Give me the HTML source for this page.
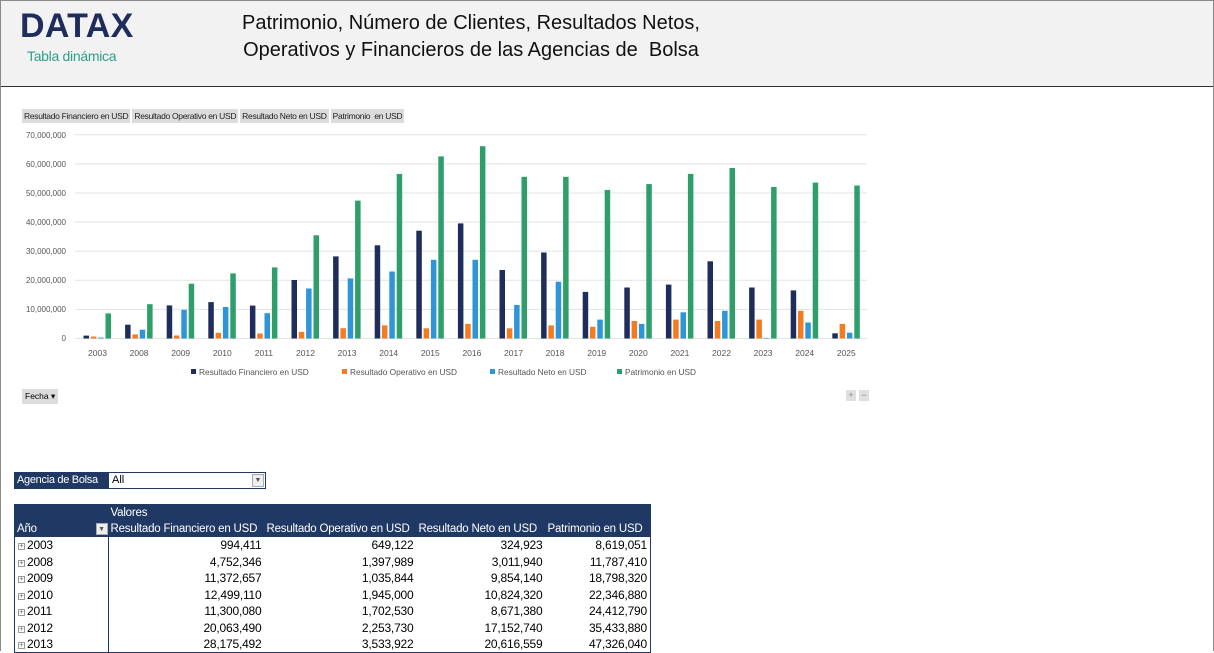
<!DOCTYPE html>
<html><head><meta charset="utf-8"><style>
*{margin:0;padding:0;box-sizing:border-box}
body{width:1214px;height:651px;overflow:hidden;background:#fff;font-family:"Liberation Sans",sans-serif;position:relative}
.frame{position:absolute;left:0;top:0;width:1214px;height:651px;border:1px solid #8a8a8a;border-bottom:none}
.hdr{position:absolute;left:1px;top:1px;width:1212px;height:86px;background:#f2f2f2;border-bottom:1px solid #333}
.logo{position:absolute;left:19px;top:6px;font-size:34px;font-weight:bold;color:#1f2d5c;letter-spacing:0.3px}
.sub{position:absolute;left:26px;top:47px;font-size:14px;color:#2e9e8a;letter-spacing:-0.3px}
.title{position:absolute;left:190px;top:9px;width:560px;text-align:center;font-size:20px;line-height:27px;color:#111}
.tabs{position:absolute;left:22px;top:109px;display:flex;gap:2px}
.tabs span{background:#dcdcdc;font-size:8.5px;padding:2px 2px;color:#222;letter-spacing:-0.3px}
.fecha{position:absolute;left:22px;top:389px;background:#dcdcdc;font-size:8.5px;padding:2px 3px}
.pm{position:absolute;top:390px;width:10px;height:11px;background:#e0e0e0;font-size:9px;color:#888;text-align:center;line-height:11px}
.filt{position:absolute;left:14px;top:472px;width:252px;height:17px;border:1px solid #203864;display:flex;font-size:11px;white-space:nowrap}
.filt .l{background:#203864;color:#fff;width:94px;padding:1px 2px;letter-spacing:-0.3px}
.filt .r{flex:1;padding:1px 3px;position:relative}
.dd{position:absolute;right:1px;top:1px;width:12px;height:13px;border:1px solid #aaa;background:#eee;font-size:7px;text-align:center;line-height:12px;color:#555}
table{position:absolute;left:14px;top:504px;width:636px;table-layout:fixed;border-collapse:collapse;font-size:12px;border:1px solid #203864}
th{background:#203864;color:#fff;font-weight:normal;text-align:left;padding:0 2px;height:16.5px;white-space:nowrap;font-size:11.5px;letter-spacing:-0.2px;overflow:hidden}
td{height:16.5px;text-align:right;padding:0 3px;white-space:nowrap;letter-spacing:-0.2px}
td:first-child{text-align:left;border-right:1px solid #203864}
.pl{display:inline-block;width:7px;height:7px;border:1px solid #999;font-size:7px;line-height:5px;text-align:center;margin-right:2px;vertical-align:1px;color:#555}
</style></head><body>
<div class="frame"></div>
<div class="hdr">
<div class="logo">DATAX</div>
<div class="sub">Tabla dinámica</div>
<div class="title">Patrimonio, Número de Clientes, Resultados Netos,<br>Operativos y Financieros de las Agencias de&nbsp; Bolsa</div>
</div>
<div class="tabs"><span>Resultado Financiero en USD</span><span>Resultado Operativo en USD</span><span>Resultado Neto en USD</span><span>Patrimonio &nbsp;en USD</span></div>
<svg style="position:absolute;left:0;top:0" width="1214" height="420">
<g stroke="#e3e3e3" stroke-width="1">
<line x1="75" x2="867" y1="338.5" y2="338.5"/><line x1="75" x2="867" y1="309.4" y2="309.4"/><line x1="75" x2="867" y1="280.3" y2="280.3"/><line x1="75" x2="867" y1="251.2" y2="251.2"/><line x1="75" x2="867" y1="222.1" y2="222.1"/><line x1="75" x2="867" y1="193" y2="193"/><line x1="75" x2="867" y1="163.9" y2="163.9"/><line x1="75" x2="867" y1="134.8" y2="134.8"/>
</g>
<g font-size="8" fill="#555" text-anchor="end">
<text x="66" y="341">0</text><text x="66" y="312">10,000,000</text><text x="66" y="283">20,000,000</text><text x="66" y="254">30,000,000</text><text x="66" y="225">40,000,000</text><text x="66" y="196">50,000,000</text><text x="66" y="167">60,000,000</text><text x="66" y="138">70,000,000</text>
</g>
<g id="bars">
<g transform="translate(97.5,338.5) scale(1,-1)"><rect x="-14" width="5.5" height="2.9" fill="#1f2d5c"/><rect x="-6.7" width="5.5" height="1.9" fill="#f47c20"/><rect x="0.6" width="5.5" height="0.9" fill="#2e96d6"/><rect x="8" width="5.5" height="25.1" fill="#2e9e6a"/></g>
<g transform="translate(139.1,338.5) scale(1,-1)"><rect x="-14" width="5.5" height="13.8" fill="#1f2d5c"/><rect x="-6.7" width="5.5" height="4.1" fill="#f47c20"/><rect x="0.6" width="5.5" height="8.8" fill="#2e96d6"/><rect x="8" width="5.5" height="34.3" fill="#2e9e6a"/></g>
<g transform="translate(180.7,338.5) scale(1,-1)"><rect x="-14" width="5.5" height="33.1" fill="#1f2d5c"/><rect x="-6.7" width="5.5" height="3" fill="#f47c20"/><rect x="0.6" width="5.5" height="28.7" fill="#2e96d6"/><rect x="8" width="5.5" height="54.8" fill="#2e9e6a"/></g>
<g transform="translate(222.3,338.5) scale(1,-1)"><rect x="-14" width="5.5" height="36.4" fill="#1f2d5c"/><rect x="-6.7" width="5.5" height="5.7" fill="#f47c20"/><rect x="0.6" width="5.5" height="31.5" fill="#2e96d6"/><rect x="8" width="5.5" height="65.1" fill="#2e9e6a"/></g>
<g transform="translate(263.9,338.5) scale(1,-1)"><rect x="-14" width="5.5" height="32.9" fill="#1f2d5c"/><rect x="-6.7" width="5.5" height="5" fill="#f47c20"/><rect x="0.6" width="5.5" height="25.3" fill="#2e96d6"/><rect x="8" width="5.5" height="71.1" fill="#2e9e6a"/></g>
<g transform="translate(305.5,338.5) scale(1,-1)"><rect x="-14" width="5.5" height="58.5" fill="#1f2d5c"/><rect x="-6.7" width="5.5" height="6.6" fill="#f47c20"/><rect x="0.6" width="5.5" height="50" fill="#2e96d6"/><rect x="8" width="5.5" height="103.2" fill="#2e9e6a"/></g>
<g transform="translate(347.1,338.5) scale(1,-1)"><rect x="-14" width="5.5" height="82.1" fill="#1f2d5c"/><rect x="-6.7" width="5.5" height="10.3" fill="#f47c20"/><rect x="0.6" width="5.5" height="60.1" fill="#2e96d6"/><rect x="8" width="5.5" height="137.9" fill="#2e9e6a"/></g>
<g transform="translate(388.7,338.5) scale(1,-1)"><rect x="-14" width="5.5" height="93.2" fill="#1f2d5c"/><rect x="-6.7" width="5.5" height="13.1" fill="#f47c20"/><rect x="0.6" width="5.5" height="67" fill="#2e96d6"/><rect x="8" width="5.5" height="164.6" fill="#2e9e6a"/></g>
<g transform="translate(430.3,338.5) scale(1,-1)"><rect x="-14" width="5.5" height="107.8" fill="#1f2d5c"/><rect x="-6.7" width="5.5" height="10.2" fill="#f47c20"/><rect x="0.6" width="5.5" height="78.7" fill="#2e96d6"/><rect x="8" width="5.5" height="182.1" fill="#2e9e6a"/></g>
<g transform="translate(471.9,338.5) scale(1,-1)"><rect x="-14" width="5.5" height="115.1" fill="#1f2d5c"/><rect x="-6.7" width="5.5" height="14.6" fill="#f47c20"/><rect x="0.6" width="5.5" height="78.7" fill="#2e96d6"/><rect x="8" width="5.5" height="192.3" fill="#2e9e6a"/></g>
<g transform="translate(513.5,338.5) scale(1,-1)"><rect x="-14" width="5.5" height="68.5" fill="#1f2d5c"/><rect x="-6.7" width="5.5" height="10.2" fill="#f47c20"/><rect x="0.6" width="5.5" height="33.5" fill="#2e96d6"/><rect x="8" width="5.5" height="161.7" fill="#2e9e6a"/></g>
<g transform="translate(555.1,338.5) scale(1,-1)"><rect x="-14" width="5.5" height="86" fill="#1f2d5c"/><rect x="-6.7" width="5.5" height="13.1" fill="#f47c20"/><rect x="0.6" width="5.5" height="56.8" fill="#2e96d6"/><rect x="8" width="5.5" height="161.7" fill="#2e9e6a"/></g>
<g transform="translate(596.7,338.5) scale(1,-1)"><rect x="-14" width="5.5" height="46.6" fill="#1f2d5c"/><rect x="-6.7" width="5.5" height="11.7" fill="#f47c20"/><rect x="0.6" width="5.5" height="18.9" fill="#2e96d6"/><rect x="8" width="5.5" height="148.6" fill="#2e9e6a"/></g>
<g transform="translate(638.3,338.5) scale(1,-1)"><rect x="-14" width="5.5" height="51" fill="#1f2d5c"/><rect x="-6.7" width="5.5" height="17.5" fill="#f47c20"/><rect x="0.6" width="5.5" height="14.6" fill="#2e96d6"/><rect x="8" width="5.5" height="154.4" fill="#2e9e6a"/></g>
<g transform="translate(679.9,338.5) scale(1,-1)"><rect x="-14" width="5.5" height="53.9" fill="#1f2d5c"/><rect x="-6.7" width="5.5" height="18.9" fill="#f47c20"/><rect x="0.6" width="5.5" height="26.2" fill="#2e96d6"/><rect x="8" width="5.5" height="164.6" fill="#2e9e6a"/></g>
<g transform="translate(721.5,338.5) scale(1,-1)"><rect x="-14" width="5.5" height="77.2" fill="#1f2d5c"/><rect x="-6.7" width="5.5" height="17.5" fill="#f47c20"/><rect x="0.6" width="5.5" height="27.7" fill="#2e96d6"/><rect x="8" width="5.5" height="170.5" fill="#2e9e6a"/></g>
<g transform="translate(763.1,338.5) scale(1,-1)"><rect x="-14" width="5.5" height="51" fill="#1f2d5c"/><rect x="-6.7" width="5.5" height="18.9" fill="#f47c20"/><rect x="0.6" width="5.5" height="0.6" fill="#2e96d6"/><rect x="8" width="5.5" height="151.5" fill="#2e9e6a"/></g>
<g transform="translate(804.7,338.5) scale(1,-1)"><rect x="-14" width="5.5" height="48.1" fill="#1f2d5c"/><rect x="-6.7" width="5.5" height="27.7" fill="#f47c20"/><rect x="0.6" width="5.5" height="16" fill="#2e96d6"/><rect x="8" width="5.5" height="155.9" fill="#2e9e6a"/></g>
<g transform="translate(846.3,338.5) scale(1,-1)"><rect x="-14" width="5.5" height="5.2" fill="#1f2d5c"/><rect x="-6.7" width="5.5" height="14.6" fill="#f47c20"/><rect x="0.6" width="5.5" height="5.8" fill="#2e96d6"/><rect x="8" width="5.5" height="153" fill="#2e9e6a"/></g>
</g>
<g font-size="8.5" fill="#555" text-anchor="middle">
<text x="97.5" y="356">2003</text><text x="139.1" y="356">2008</text><text x="180.7" y="356">2009</text><text x="222.3" y="356">2010</text><text x="263.9" y="356">2011</text><text x="305.5" y="356">2012</text><text x="347.1" y="356">2013</text><text x="388.7" y="356">2014</text><text x="430.3" y="356">2015</text><text x="471.9" y="356">2016</text><text x="513.5" y="356">2017</text><text x="555.1" y="356">2018</text><text x="596.7" y="356">2019</text><text x="638.3" y="356">2020</text><text x="679.9" y="356">2021</text><text x="721.5" y="356">2022</text><text x="763.1" y="356">2023</text><text x="804.7" y="356">2024</text><text x="846.3" y="356">2025</text>
</g>
<g font-size="8.3" fill="#555">
<rect x="191" y="369" width="5" height="5" fill="#1f2d5c"/><text x="199" y="375">Resultado Financiero en USD</text>
<rect x="342" y="369" width="5" height="5" fill="#f47c20"/><text x="350" y="375">Resultado Operativo en USD</text>
<rect x="490" y="369" width="5" height="5" fill="#2e96d6"/><text x="498" y="375">Resultado Neto en USD</text>
<rect x="617" y="369" width="5" height="5" fill="#2e9e6a"/><text x="625" y="375">Patrimonio en USD</text>
</g>
</svg>
<div class="fecha">Fecha ▾</div>
<div class="pm" style="left:846px">+</div><div class="pm" style="left:859px">−</div>
<div class="filt"><div class="l">Agencia de Bolsa</div><div class="r">All<div class="dd">▼</div></div></div>
<table>
<colgroup><col style="width:94px"><col style="width:156px"><col style="width:152px"><col style="width:129px"><col style="width:105px"></colgroup>
<tr><th style="height:16px"></th><th colspan="4" style="height:16px">Valores</th></tr>
<tr><th style="position:relative">Año<span style="position:absolute;right:1px;top:2px;width:12px;height:12px;background:#eee;border:1px solid #aaa;color:#555;font-size:7px;text-align:center;line-height:11px">▼</span></th><th>Resultado Financiero en USD</th><th>Resultado Operativo en USD</th><th>Resultado Neto en USD</th><th>Patrimonio en USD</th></tr>
<tr><td><span class="pl">+</span>2003</td><td>994,411</td><td>649,122</td><td>324,923</td><td>8,619,051</td></tr>
<tr><td><span class="pl">+</span>2008</td><td>4,752,346</td><td>1,397,989</td><td>3,011,940</td><td>11,787,410</td></tr>
<tr><td><span class="pl">+</span>2009</td><td>11,372,657</td><td>1,035,844</td><td>9,854,140</td><td>18,798,320</td></tr>
<tr><td><span class="pl">+</span>2010</td><td>12,499,110</td><td>1,945,000</td><td>10,824,320</td><td>22,346,880</td></tr>
<tr><td><span class="pl">+</span>2011</td><td>11,300,080</td><td>1,702,530</td><td>8,671,380</td><td>24,412,790</td></tr>
<tr><td><span class="pl">+</span>2012</td><td>20,063,490</td><td>2,253,730</td><td>17,152,740</td><td>35,433,880</td></tr>
<tr><td><span class="pl">+</span>2013</td><td>28,175,492</td><td>3,533,922</td><td>20,616,559</td><td>47,326,040</td></tr>
</table>
</body></html>
